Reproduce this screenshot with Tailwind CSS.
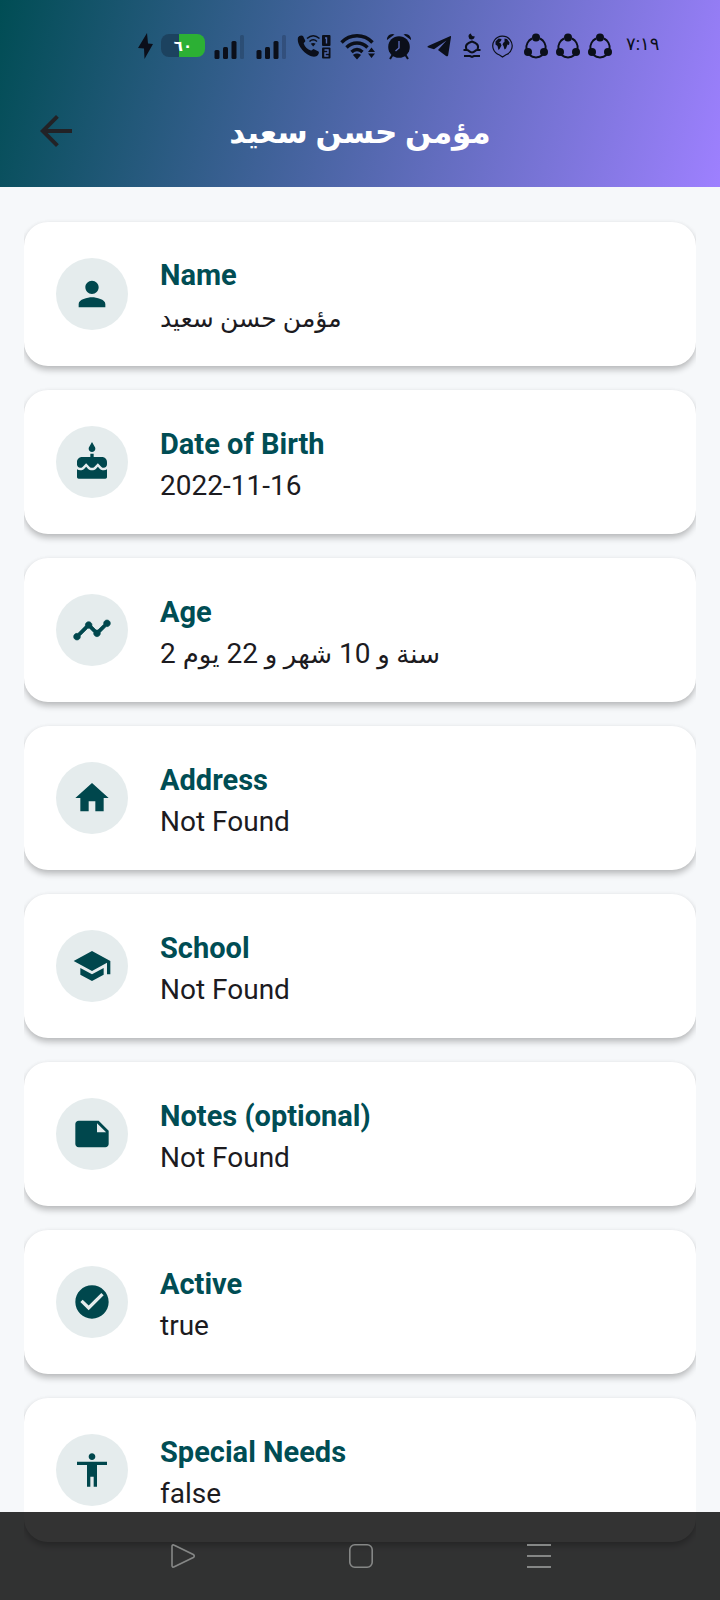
<!DOCTYPE html>
<html lang="en">
<head>
<meta charset="utf-8">
<meta name="viewport" content="width=device-width, initial-scale=1">
<title>مؤمن حسن سعيد</title>
<script src="https://cdn.jsdelivr.net/npm/@tailwindcss/browser@4"></script>
</head>
<body class="min-h-screen bg-[#f6f8fa] font-['Roboto','DejaVu_Sans',sans-serif] text-[28px] leading-[40px] text-[#1c1b1f]">

<svg class="hidden" aria-hidden="true">
  <symbol id="signal" viewBox="0 0 34 28">
    <g fill="#0b0f1a"><rect x="1.500" y="18" width="5" height="9" rx="1.500"/><rect x="10" y="15" width="5" height="12" rx="1.500"/><rect x="18.500" y="9" width="5" height="18" rx="1.500"/></g>
    <rect x="27" y="3" width="4" height="24" rx="1.500" fill="#0b0f1a" opacity=".2"/>
  </symbol>
  <symbol id="share" viewBox="0 0 24 26">
    <g fill="none" stroke="#0b0f1a" stroke-width="2"><path d="M8 5.500A10 10 0 0 0 2.500 16"/><path d="M16 5.500A10 10 0 0 1 21.500 16"/><path d="M5.500 22A10 10 0 0 0 18.500 22"/></g>
    <g fill="#0b0f1a"><circle cx="12" cy="4.500" r="4"/><circle cx="4" cy="19" r="4"/><circle cx="20" cy="19" r="4"/></g>
  </symbol>
</svg>

<header class="bg-linear-[105deg,#004d54,#9e80ff]">
  <div class="flex h-[75px] items-center gap-2 overflow-hidden pt-4 pl-[138px] text-[#0b0f1a]">
    <svg class="h-7 w-[15px] shrink-0" viewBox="0 0 15 28" fill="currentColor"><path d="M9 1 0 16l6 .5L6.500 27 15 12l-5-.5z"/></svg>
    <div class="flex h-[23px] w-11 shrink-0 items-center justify-center rounded-lg bg-linear-[90deg,#1c425f_40%,#2cb034_40%] text-[15px] leading-4 font-bold text-white">٦٠</div>
    <svg class="h-7 w-[34px] shrink-0"><use href="#signal"/></svg>
    <svg class="h-7 w-[34px] shrink-0"><use href="#signal"/></svg>
    <svg class="h-7 w-[34px] shrink-0" viewBox="0 0 34 28" fill="currentColor">
      <path d="M1 5.500C2 3.500 4.500 2.800 6 4l2.200 4.500c.6 1.200-1.500 2-1.500 3C8 15 10.500 17.500 14 18.500c1 .3 2-1.800 3-1.300l4.500 2.300c1.200 1-.5 4.500-3 5C11 26-1 14 1 5.500z"/>
      <path d="M10 6.500c4-3.500 8.500-3.500 12.500 0M12.500 9.500c2.200-2 5.300-2 7.500 0" fill="none" stroke="currentColor" stroke-width="1.500"/><path d="m16.200 14.500-2.400-2.700c1.400-1.200 3.400-1.200 4.800 0z"/>
      <rect x="25" y="3" width="8.500" height="11" rx="1"/><rect x="25" y="15.500" width="8.500" height="11" rx="1"/>
      <path d="M28 6h1.500v5.500M27.500 18h3.500v3h-3v3h3.500" fill="none" stroke="#5068ad" stroke-width="1.400"/>
    </svg>
    <svg class="h-7 w-[38px] shrink-0" viewBox="0 0 38 28" fill="none" stroke="currentColor" stroke-width="3.400">
      <path d="M2.500 10.500c8.500-9 22.500-9 31 0M7.500 15.500c6-6 15-6 21 0M12.500 20c3.500-3.200 7.500-3.200 11 0"/>
      <path d="m18 27.500-4-4.500c2.200-2 5.800-2 8 0zM32.500 15.500l3.500 4.500h-7zM32.500 26l3.500-4.500h-7z" fill="currentColor" stroke="none"/>
    </svg>
    <svg class="h-7 w-7 shrink-0" viewBox="0 0 28 28" fill="currentColor">
      <circle cx="14" cy="15" r="10.800"/><path d="M2 8C1.500 4 6 .5 9.500 2.500zM26 8c.5-4-4-7.500-7.500-5.500z"/><path d="m7.500 23-2.500 4M20.500 23l2.500 4" stroke="currentColor" stroke-width="2"/>
      <path d="M14 9v7l-3.500 3" fill="none" stroke="#5a69b8" stroke-width="1.400"/>
    </svg>
    <svg class="h-7 w-[34px] shrink-0" viewBox="0 0 34 28" fill="currentColor"><path d="M29.500 4 7 14c-.8.500-.7 1.200.2 1.500L13 17.300 25.500 8.500 17 18l8 6c1.200.8 2 .2 2.200-1L30 5c.1-.9 0-1.200-.5-1z"/></svg>
    <svg class="h-7 w-[18px] shrink-0" viewBox="0 0 18 28" fill="none" stroke="currentColor" stroke-width="2">
      <path d="M3.500 17.500C1.500 12.500 5 11 9 9.500c4 1.500 7.500 3 5.500 8M.5 18h3.500c2 0 2 2.500 5 2.500s3-2.500 5-2.500h3.500M1 24h6l2 1 2-1h6"/><path d="M8 1.500A3 3 0 1 0 11.500 4 2.600 2.600 0 0 1 8 1.500z" fill="currentColor" stroke="none"/>
    </svg>
    <svg class="h-7 w-[27px] shrink-0" viewBox="0 0 27 28" fill="currentColor">
      <path d="M10.500 23A9.700 9.700 0 1 1 17 22.800L13.500 25z" fill="none" stroke="currentColor" stroke-width="1.200"/>
      <path d="M6.500 9.500 9.500 6.500l3 .5-.5 2-2 1.500 1.500.5 1 2.500-2 3.500-1 1-1-4L6.500 12.500zM15.500 6.500l2.500.5 2.500 3.500-.5 2.500-1.500-.5-1.500 4-1.500 1-1-3.500-1-1.500 1-2 1-.5z"/>
    </svg>
    <svg class="h-[26px] w-6 shrink-0"><use href="#share"/></svg>
    <svg class="h-[26px] w-6 shrink-0"><use href="#share"/></svg>
    <svg class="h-[26px] w-6 shrink-0"><use href="#share"/></svg>
    <time class="pb-1 pl-1.5 text-lg leading-6" datetime="07:19">٧:١٩</time>
  </div>
  <div class="grid h-28 grid-cols-[48px_1fr_48px] items-center px-8">
    <button type="button" aria-label="Back" class="size-12 text-[#222226]">
      <svg class="size-12" viewBox="0 0 24 24" fill="currentColor"><path d="M20 11H7.830l5.590-5.590L12 4l-8 8 8 8 1.410-1.410L7.830 13H20v-2z"/></svg>
    </button>
    <h1 class="pt-1 text-center text-[31px] leading-[48px] font-bold text-white">مؤمن حسن سعيد</h1>
  </div>
</header>

<main class="px-6">
  <dl class="flex flex-col gap-6 overflow-hidden pt-[35px] pb-14">
    <div class="flex h-36 items-center gap-8 rounded-3xl bg-white px-8 shadow-[0_4px_6px_rgba(0,0,0,0.24),0_0_4px_rgba(0,0,0,0.04)]">
      <div class="grid size-[72px] shrink-0 place-items-center rounded-full bg-[#e5eced] text-[#00474d]"><svg class="size-10" viewBox="0 0 24 24" fill="currentColor"><path d="M12 12c2.210 0 4-1.790 4-4s-1.790-4-4-4-4 1.790-4 4 1.790 4 4 4zm0 2c-2.670 0-8 1.340-8 4v2h16v-2c0-2.660-5.330-4-8-4z"/></svg></div>
      <div class="flex flex-col gap-0.5 pt-2"><dt class="text-[29px] font-bold text-[#004d54]">Name</dt><dd class="text-[25px] leading-[44px]">مؤمن حسن سعيد</dd></div>
    </div>
    <div class="flex h-36 items-center gap-8 rounded-3xl bg-white px-8 shadow-[0_4px_6px_rgba(0,0,0,0.24),0_0_4px_rgba(0,0,0,0.04)]">
      <div class="grid size-[72px] shrink-0 place-items-center rounded-full bg-[#e5eced] text-[#00474d]"><svg class="size-10" viewBox="0 0 24 24" fill="currentColor"><path d="M12 6c1.110 0 2-.9 2-2 0-.38-.1-.73-.29-1.030L12 0l-1.710 2.970c-.19.3-.29.65-.29 1.030 0 1.100.9 2 2 2zm4.600 9.990l-1.070-1.070-1.080 1.070c-1.300 1.300-3.580 1.310-4.890 0l-1.070-1.070-1.090 1.070C6.750 16.640 5.880 17 4.960 17c-.73 0-1.400-.23-1.960-.61V21c0 .55.45 1 1 1h16c.55 0 1-.45 1-1v-4.610c-.56.38-1.230.61-1.960.61-.92 0-1.790-.36-2.440-1.010zM18 9h-5V7h-2v2H6c-1.660 0-3 1.340-3 3v1.540c0 1.080.88 1.960 1.960 1.960.52 0 1.020-.2 1.380-.57l2.140-2.130 2.130 2.130c.74.74 2.030.74 2.770 0l2.140-2.130 2.130 2.130c.37.37.86.57 1.380.57 1.080 0 1.960-.88 1.960-1.960V12C21 10.340 19.660 9 18 9z"/></svg></div>
      <div class="flex flex-col gap-0.5 pt-1.5"><dt class="text-[29px] font-bold text-[#004d54]">Date of Birth</dt><dd>2022-11-16</dd></div>
    </div>
    <div class="flex h-36 items-center gap-8 rounded-3xl bg-white px-8 shadow-[0_4px_6px_rgba(0,0,0,0.24),0_0_4px_rgba(0,0,0,0.04)]">
      <div class="grid size-[72px] shrink-0 place-items-center rounded-full bg-[#e5eced] text-[#00474d]"><svg class="size-10" viewBox="0 0 24 24" fill="currentColor" stroke="currentColor" stroke-width=".4"><path d="M23 8c0 1.100-.9 2-2 2-.18 0-.35-.02-.51-.07l-3.560 3.550c.05.16.07.34.07.52 0 1.100-.9 2-2 2s-2-.9-2-2c0-.18.02-.36.07-.52l-2.550-2.550c-.16.05-.34.07-.52.07s-.36-.02-.52-.07l-4.550 4.560c.05.16.07.33.07.51 0 1.100-.9 2-2 2s-2-.9-2-2 .9-2 2-2c.18 0 .35.02.51.07l4.560-4.550C8.020 9.360 8 9.180 8 9c0-1.100.9-2 2-2s2 .9 2 2c0 .18-.02.36-.07.52l2.550 2.550c.16-.05.34-.07.52-.07s.36.02.52.07l3.550-3.560C19.020 8.350 19 8.180 19 8c0-1.100.9-2 2-2s2 .9 2 2z"/></svg></div>
      <div class="flex flex-col gap-0.5 pt-1.5"><dt class="text-[29px] font-bold text-[#004d54]">Age</dt><dd>2 <span class="text-[26px]">سنة و</span> 10 <span class="text-[26px]">شهر و</span> 22 <span class="text-[26px]">يوم</span></dd></div>
    </div>
    <div class="flex h-36 items-center gap-8 rounded-3xl bg-white px-8 shadow-[0_4px_6px_rgba(0,0,0,0.24),0_0_4px_rgba(0,0,0,0.04)]">
      <div class="grid size-[72px] shrink-0 place-items-center rounded-full bg-[#e5eced] text-[#00474d]"><svg class="size-10" viewBox="0 0 24 24" fill="currentColor"><path d="M10 20v-6h4v6h5v-8h3L12 3 2 12h3v8z"/></svg></div>
      <div class="flex flex-col gap-0.5 pt-1.5"><dt class="text-[29px] font-bold text-[#004d54]">Address</dt><dd>Not Found</dd></div>
    </div>
    <div class="flex h-36 items-center gap-8 rounded-3xl bg-white px-8 shadow-[0_4px_6px_rgba(0,0,0,0.24),0_0_4px_rgba(0,0,0,0.04)]">
      <div class="grid size-[72px] shrink-0 place-items-center rounded-full bg-[#e5eced] text-[#00474d]"><svg class="size-10" viewBox="0 0 24 24" fill="currentColor"><path d="M5 13.180v4L12 21l7-3.820v-4L12 17l-7-3.820zM12 3L1 9l11 6 9-4.910V17h2V9L12 3z"/></svg></div>
      <div class="flex flex-col gap-0.5 pt-1.5"><dt class="text-[29px] font-bold text-[#004d54]">School</dt><dd>Not Found</dd></div>
    </div>
    <div class="flex h-36 items-center gap-8 rounded-3xl bg-white px-8 shadow-[0_4px_6px_rgba(0,0,0,0.24),0_0_4px_rgba(0,0,0,0.04)]">
      <div class="grid size-[72px] shrink-0 place-items-center rounded-full bg-[#e5eced] text-[#00474d]"><svg class="size-10" viewBox="0 0 24 24" fill="currentColor"><path d="M22 10l-6-6H4c-1.100 0-2 .9-2 2v12.010c0 1.100.9 1.990 2 1.990l16-.01c1.100 0 2-.89 2-1.990v-8zm-7-4.500l5.500 5.500H15V5.500z"/></svg></div>
      <div class="flex flex-col gap-0.5 pt-1.5"><dt class="text-[29px] font-bold text-[#004d54]">Notes (optional)</dt><dd>Not Found</dd></div>
    </div>
    <div class="flex h-36 items-center gap-8 rounded-3xl bg-white px-8 shadow-[0_4px_6px_rgba(0,0,0,0.24),0_0_4px_rgba(0,0,0,0.04)]">
      <div class="grid size-[72px] shrink-0 place-items-center rounded-full bg-[#e5eced] text-[#00474d]"><svg class="size-10" viewBox="0 0 24 24" fill="currentColor"><path d="M12 2C6.480 2 2 6.480 2 12s4.480 10 10 10 10-4.480 10-10S17.520 2 12 2zm-2 15l-5-5 1.410-1.410L10 14.170l7.590-7.590L19 8l-9 9z"/></svg></div>
      <div class="flex flex-col gap-0.5 pt-1.5"><dt class="text-[29px] font-bold text-[#004d54]">Active</dt><dd>true</dd></div>
    </div>
    <div class="flex h-36 items-center gap-8 rounded-3xl bg-white px-8 shadow-[0_4px_6px_rgba(0,0,0,0.24),0_0_4px_rgba(0,0,0,0.04)]">
      <div class="grid size-[72px] shrink-0 place-items-center rounded-full bg-[#e5eced] text-[#00474d]"><svg class="size-10" viewBox="0 0 24 24" fill="currentColor"><path d="M12 2c1.100 0 2 .9 2 2s-.9 2-2 2-2-.9-2-2 .9-2 2-2zm9 7h-6v13h-2v-6h-2v6H9V9H3V7h18v2z"/></svg></div>
      <div class="flex flex-col gap-0.5 pt-1.5"><dt class="text-[29px] font-bold text-[#004d54]">Special Needs</dt><dd>false</dd></div>
    </div>
  </dl>
</main>

<nav aria-label="System" class="fixed inset-x-0 bottom-0 flex h-[88px] items-center bg-black/80 px-[13%] text-[#858786]">
  <button type="button" aria-label="Back" class="grid flex-1 place-items-center"><svg class="size-7" viewBox="0 0 28 28" fill="none" stroke="currentColor" stroke-width="1.600" stroke-linejoin="round"><path d="M4 4.500v19c0 1.500 1 2 2.300 1.300l19-9.300c1.300-.8 1.300-2.200 0-3l-19-9.300C5 2.500 4 3 4 4.500z"/></svg></button>
  <button type="button" aria-label="Home" class="grid flex-1 place-items-center"><svg class="size-7" viewBox="0 0 28 28" fill="none" stroke="currentColor" stroke-width="1.600"><rect x="3.800" y="2.800" width="22.400" height="22.400" rx="5"/></svg></button>
  <button type="button" aria-label="Recent apps" class="grid flex-1 place-items-center"><svg class="size-7" viewBox="0 0 28 28" fill="none" stroke="currentColor" stroke-width="2"><path d="M3 3h24M3 14h24M3 25h24"/></svg></button>
</nav>
</body>
</html>
